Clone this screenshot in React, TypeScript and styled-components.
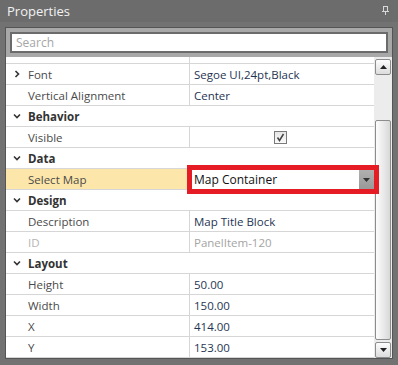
import React from "react";
import styled, { createGlobalStyle } from "styled-components";

const GlobalStyle = createGlobalStyle`
    body {
        margin: 0;
        background: #707070;
    }
`;

type Prop = {
    label: string;
    value?: string;
    kind?: "text" | "check" | "select" | "disabled";
    collapsed?: boolean;
};

type Category = { name: string; props: Prop[] };

const sections: Category[] = [
    {
        name: "",
        props: [
            { label: "Font", value: "Segoe UI,24pt,Black", collapsed: true },
            { label: "Vertical Alignment", value: "Center" },
        ],
    },
    { name: "Behavior", props: [{ label: "Visible", kind: "check" }] },
    { name: "Data", props: [{ label: "Select Map", value: "Map Container", kind: "select" }] },
    {
        name: "Design",
        props: [
            { label: "Description", value: "Map Title Block" },
            { label: "ID", value: "PanelItem-120", kind: "disabled" },
        ],
    },
    {
        name: "Layout",
        props: [
            { label: "Height", value: "50.00" },
            { label: "Width", value: "150.00" },
            { label: "X", value: "414.00" },
            { label: "Y", value: "153.00" },
        ],
    },
];

const Chevron: React.FC<{ down?: boolean }> = ({ down }) => (
    <svg width="8" height="8" viewBox="0 0 8 8">
        {down ? (
            <polyline points="1,2.5 4,5.5 7,2.5" fill="none" stroke="#333" strokeWidth="1.6" />
        ) : (
            <polyline points="2.5,1 5.5,4 2.5,7" fill="none" stroke="#333" strokeWidth="1.6" />
        )}
    </svg>
);

const PinIcon = () => (
    <svg width="7" height="9" viewBox="0 0 7 9">
        <rect x="1.5" y="0.5" width="4" height="5" fill="none" stroke="#d8d8d8" />
        <rect x="0" y="5" width="7" height="1" fill="#d8d8d8" />
        <rect x="3" y="6" width="1" height="3" fill="#d8d8d8" />
    </svg>
);

const App: React.FC = () => {
    return (
        <>
            <GlobalStyle />
            <Panel>
                <TitleBar>
                    <span>Properties</span>
                    <PinIcon />
                </TitleBar>
                <Body>
                    <SearchArea>
                        <SearchBox placeholder="Search" />
                    </SearchArea>
                    <Grid>
                        <List>
                            <PartialRow>
                                <span />
                                <span />
                            </PartialRow>
                            {sections.map((sec, si) => (
                                <React.Fragment key={`sec-${si}`}>
                                    {sec.name && (
                                        <CategoryRow>
                                            <Toggle>
                                                <Chevron down />
                                            </Toggle>
                                            {sec.name}
                                        </CategoryRow>
                                    )}
                                    {sec.props.map((p) => (
                                        <Row key={p.label}>
                                            <Label
                                                selected={p.kind === "select"}
                                                disabled={p.kind === "disabled"}
                                            >
                                                {p.collapsed && (
                                                    <Toggle>
                                                        <Chevron />
                                                    </Toggle>
                                                )}
                                                {p.label}
                                            </Label>
                                            <Value disabled={p.kind === "disabled"}>
                                                {p.kind === "check" ? (
                                                    <CheckBox>
                                                        <svg width="9" height="9" viewBox="0 0 9 9">
                                                            <polyline
                                                                points="1.5,4.5 3.5,7.5 7.5,1"
                                                                fill="none"
                                                                stroke="#444"
                                                                strokeWidth="1.5"
                                                            />
                                                        </svg>
                                                    </CheckBox>
                                                ) : p.kind === "select" ? null : (
                                                    p.value
                                                )}
                                            </Value>
                                            {p.kind === "select" && (
                                                <Highlight>
                                                    <SelectText>{p.value}</SelectText>
                                                    <DropButton>
                                                        <svg width="7" height="4" viewBox="0 0 7 4">
                                                            <polygon points="0,0 7,0 3.5,4" fill="#333" />
                                                        </svg>
                                                    </DropButton>
                                                </Highlight>
                                            )}
                                        </Row>
                                    ))}
                                </React.Fragment>
                            ))}
                        </List>
                        <ScrollBar>
                            <ScrollButton>
                                <svg width="7" height="4" viewBox="0 0 7 4">
                                    <polygon points="0,4 7,4 3.5,0" fill="#222" />
                                </svg>
                            </ScrollButton>
                            <Track>
                                <Thumb />
                            </Track>
                            <ScrollButton>
                                <svg width="7" height="4" viewBox="0 0 7 4">
                                    <polygon points="0,0 7,0 3.5,4" fill="#222" />
                                </svg>
                            </ScrollButton>
                        </ScrollBar>
                    </Grid>
                </Body>
            </Panel>
        </>
    );
};

const Panel = styled.div`
    width: 398px;
    height: 365px;
    background: #727272;
    display: flex;
    flex-direction: column;
    font-family: "Open Sans", "Noto Sans", sans-serif;
    font-size: 11.5px;
`;

const TitleBar = styled.div`
    height: 22px;
    flex-shrink: 0;
    background: #6c6c6c;
    color: #f2f2f2;
    font-size: 13px;
    display: flex;
    align-items: center;
    justify-content: space-between;
    padding: 0 9px 0 7px;
    svg {
        margin-top: -1px;
    }
`;

const Body = styled.div`
    margin: 5px 5px 6px 5px;
    border: 1px solid #555;
    flex: 1;
    min-height: 0;
    display: flex;
    flex-direction: column;
    background: #fff;
`;

const SearchArea = styled.div`
    background: #a8a8a8;
    padding: 4px;
    height: 29px;
    box-sizing: border-box;
`;

const SearchBox = styled.input`
    display: block;
    width: 100%;
    height: 21px;
    box-sizing: border-box;
    border: 2px solid #6b6b6b;
    background: #fff;
    padding: 0 4px;
    font-family: inherit;
    font-size: 12px;
    outline: none;
    &::placeholder {
        color: #a6a6a6;
    }
`;

const Grid = styled.div`
    flex: 1;
    display: flex;
    min-height: 0;
`;

const List = styled.div`
    flex: 1;
    display: flex;
    flex-direction: column;
`;

const Row = styled.div`
    position: relative;
    height: 20px;
    flex-shrink: 0;
    display: grid;
    grid-template-columns: 184px 1fr;
    border-bottom: 1px solid #d6d6d6;
`;

const PartialRow = styled(Row)`
    height: 6px;
    span:first-child {
        border-right: 1px solid #d6d6d6;
    }
`;

const Label = styled.div<{ selected?: boolean; disabled?: boolean }>`
    position: relative;
    display: flex;
    align-items: center;
    padding-left: 22px;
    border-right: 1px solid #d6d6d6;
    background: ${(p) => (p.selected ? "#fde6a9" : "transparent")};
    color: ${(p) => (p.disabled ? "#b4b4b4" : "#4a4a4a")};
`;

const Value = styled.div<{ disabled?: boolean }>`
    display: flex;
    align-items: center;
    padding-left: 4px;
    color: ${(p) => (p.disabled ? "#a4a4a4" : "#1f3552")};
`;

const Toggle = styled.span`
    position: absolute;
    left: 7px;
    top: 0;
    bottom: 0;
    display: flex;
    align-items: center;
`;

const CategoryRow = styled.div`
    position: relative;
    height: 20px;
    flex-shrink: 0;
    display: flex;
    align-items: center;
    padding-left: 22px;
    font-weight: 700;
    color: #333;
    border-bottom: 1px solid #d6d6d6;
`;

const CheckBox = styled.span`
    width: 11px;
    height: 11px;
    margin-left: 80px;
    border: 1px solid #7a7a7a;
    background: linear-gradient(#e6e6e6, #fafafa);
    display: flex;
    align-items: center;
    justify-content: center;
`;

const Highlight = styled.div`
    position: absolute;
    z-index: 2;
    left: 181px;
    top: -4px;
    width: 192px;
    height: 29px;
    box-sizing: border-box;
    border: 5px solid #e51c24;
    background: #fff;
    display: flex;
    align-items: center;
`;

const SelectText = styled.span`
    flex: 1;
    padding-left: 2px;
    color: #111;
    font-size: 12px;
`;

const DropButton = styled.span`
    width: 15px;
    align-self: stretch;
    background: linear-gradient(#b0b0b0, #999);
    display: flex;
    align-items: center;
    justify-content: center;
`;

const ScrollBar = styled.div`
    width: 18px;
    background: #ececec;
    display: flex;
    flex-direction: column;
    padding: 2px 1px 0 1px;
    box-sizing: border-box;
`;

const ScrollButton = styled.div`
    height: 16px;
    flex-shrink: 0;
    box-sizing: border-box;
    border: 1px solid #8c8c8c;
    border-radius: 2px;
    background: linear-gradient(#fdfdfd, #dcdcdc);
    display: flex;
    align-items: center;
    justify-content: center;
`;

const Track = styled.div`
    flex: 1;
    display: flex;
    flex-direction: column;
    padding: 45px 0 2px 0;
`;

const Thumb = styled.div`
    flex: 1;
    border: 1px solid #8c8c8c;
    border-radius: 2px;
    background: linear-gradient(90deg, #fdfdfd, #d8d8d8);
`;

export default App;
